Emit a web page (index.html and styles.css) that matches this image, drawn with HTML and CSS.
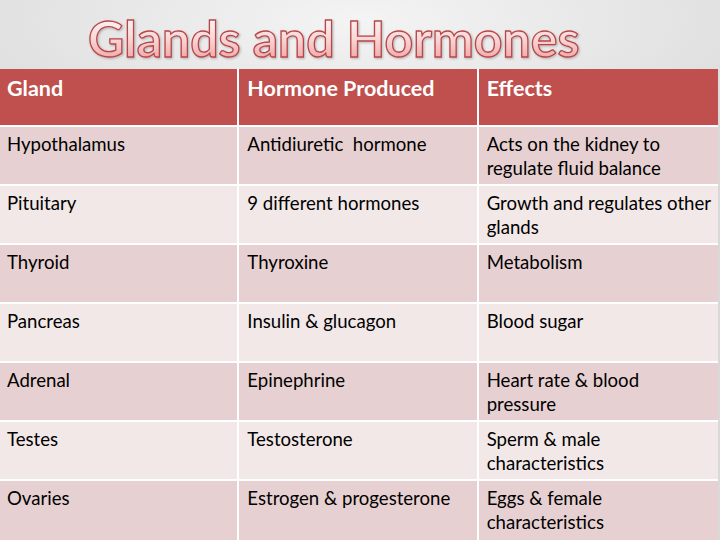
FILE: index.html
```html
<!DOCTYPE html>
<html>
<head>
<meta charset="utf-8">
<link rel="stylesheet" href="styles.css">
</head>
<body>
<div class="slide">
  <h1 class="title">Glands and Hormones</h1>
  <table class="grid">
    <thead>
      <tr><th>Gland</th><th>Hormone Produced</th><th>Effects</th></tr>
    </thead>
    <tbody>
      <tr class="odd"><td>Hypothalamus</td><td>Antidiuretic&nbsp; hormone</td><td>Acts on the kidney to regulate fluid balance</td></tr>
      <tr class="even"><td>Pituitary</td><td>9 different hormones</td><td>Growth and regulates other glands</td></tr>
      <tr class="odd"><td>Thyroid</td><td>Thyroxine</td><td>Metabolism</td></tr>
      <tr class="even"><td>Pancreas</td><td>Insulin &amp; glucagon</td><td>Blood sugar</td></tr>
      <tr class="odd"><td>Adrenal</td><td>Epinephrine</td><td>Heart rate &amp; blood<br>pressure</td></tr>
      <tr class="even"><td>Testes</td><td>Testosterone</td><td>Sperm &amp; male characteristics</td></tr>
      <tr class="odd"><td>Ovaries</td><td>Estrogen &amp; progesterone</td><td>Eggs &amp; female characteristics</td></tr>
    </tbody>
  </table>
</div>
</body>
</html>
```
FILE: styles.css
```css
html, body {
  margin: 0;
  padding: 0;
}
body {
  width: 720px;
  height: 540px;
  overflow: hidden;
  background: radial-gradient(ellipse 520px 160px at 360px 20px, #f4f4f4 0%, #e4e4e4 60%, #d9d9d9 100%);
  font-family: Lato, "Open Sans", sans-serif;
}
.slide {
  width: 720px;
  height: 540px;
}
.title {
  margin: 0;
  height: 69px;
  box-sizing: border-box;
  padding: 10px 0 0 88px;
  font-family: Lato, sans-serif;
  font-weight: 700;
  font-size: 50px;
  line-height: 56px;
  letter-spacing: 0;
  color: transparent;
  background: linear-gradient(180deg, #fff4f4 0%, #f9d6d6 45%, #ee9e9e 100%);
  -webkit-background-clip: text;
  background-clip: text;
  -webkit-text-stroke: 1.3px #b5474a;
  background-size: 100% 46px;
  background-position: 0 18px;
  background-repeat: no-repeat;
  filter: drop-shadow(1.5px 1.5px 0.8px rgba(120, 120, 120, 0.45));
}
.grid {
  border-collapse: separate;
  border-spacing: 0;
  width: 718px;
  table-layout: fixed;
  font-size: 18.6px;
  line-height: 24px;
  color: #000;
}
.grid th, .grid td {
  width: 238px;
  text-align: left;
  vertical-align: top;
  border-right: 2px solid #fff;
  border-bottom: 2px solid #fff;
  padding: 0 4px 0 8px;
}
.grid th:first-child, .grid td:first-child {
  padding-left: 7px;
}
.grid th:last-child, .grid td:last-child {
  border-right: none;
}
.grid th {
  background: #c0504d;
  color: #fff;
  font-weight: 700;
  font-size: 21.5px;
  line-height: 26px;
  padding-top: 6px;
  box-sizing: border-box;
  height: 58px;
}
.grid td {
  height: 59px;
  box-sizing: border-box;
  padding-top: 5px;
}
.grid tr:last-child td {
  border-bottom: none;
}
.odd td {
  background: #e7d0d1;
}
.even td {
  background: #f2e8e8;
}
```
